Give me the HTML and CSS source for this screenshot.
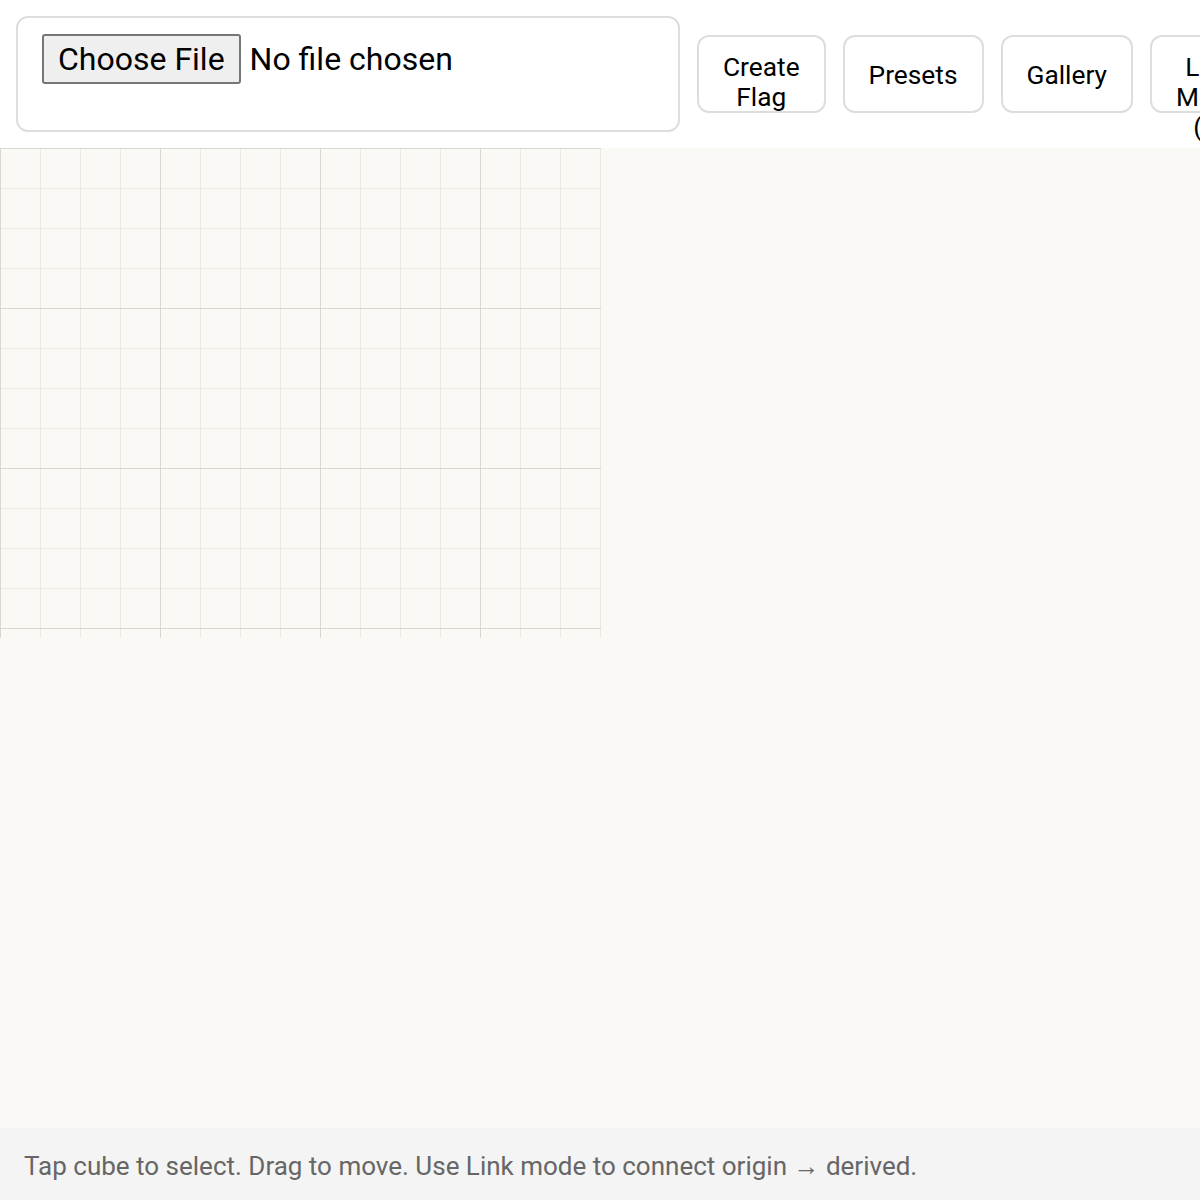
FILE: index.html
```html
<!DOCTYPE html>
<html lang="en">
<head>
<meta charset="utf-8">
<title>Cube Flags</title>
<link rel="stylesheet" href="styles.css">
</head>
<body>
<div class="app">
  <header class="toolbar">
    <div class="file-box">
      <input class="file-input" type="file" accept="image/*">
    </div>
    <button class="tool-btn" type="button">Create Flag</button>
    <button class="tool-btn" type="button">Presets</button>
    <button class="tool-btn" type="button">Gallery</button>
    <button class="tool-btn" type="button">Link Mode (L)</button>
  </header>
  <main class="stage">
    <div class="grid"></div>
  </main>
  <footer class="status">Tap cube to select. Drag to move. Use Link mode to connect origin → derived.</footer>
</div>
</body>
</html>
```

FILE: styles.css
```css
html, body {
  margin: 0;
  padding: 0;
  height: 100%;
  overflow: hidden;
}

body {
  font-family: Roboto, "Liberation Sans", sans-serif;
  background: #ffffff;
  color: #000;
}

.app {
  display: flex;
  flex-direction: column;
  height: 100vh;
  width: 100vw;
  overflow: hidden;
}

/* top toolbar */
.toolbar {
  display: flex;
  align-items: center;
  gap: 17px;
  padding: 16px 16px 16px;
  background: #ffffff;
  flex: none;
}

.file-box {
  flex: none;
  box-sizing: border-box;
  width: 664px;
  height: 116px;
  padding: 16px 24px;
  border: 2px solid #dddddd;
  border-radius: 12px;
  background: #fff;
}

.file-input {
  font-family: Roboto, "Liberation Sans", sans-serif;
  font-size: 32px;
  color: #000;
}

.file-input::file-selector-button {
  font-family: inherit;
  font-size: 32px;
  height: 50px;
  padding: 0 14px;
  margin-right: 9px;
  background: #efefef;
  border: 2px solid #767676;
  border-radius: 3px;
  color: #000;
}

.tool-btn {
  flex: 0 1 auto;
  box-sizing: border-box;
  height: 78px;
  padding: 15px 24px 13px;
  border: 2px solid #dddddd;
  border-radius: 12px;
  background: #ffffff;
  font-family: Roboto, "Liberation Sans", sans-serif;
  font-size: 26.3px;
  color: #000;
  line-height: 30px;
}

/* canvas area */
.stage {
  flex: 1;
  background: #faf9f6;
}

.grid {
  width: 601px;
  height: 490px;
  background-color: #faf9f6;
  background-image:
    linear-gradient(to right, #d9d7d2 1px, transparent 1px),
    linear-gradient(to bottom, #d9d7d2 1px, transparent 1px),
    linear-gradient(to right, #ebe9e4 1px, transparent 1px),
    linear-gradient(to bottom, #ebe9e4 1px, transparent 1px);
  background-size: 160px 160px, 160px 160px, 40px 40px, 40px 40px;
}

/* bottom hint */
.status {
  flex: none;
  box-sizing: border-box;
  height: 72px;
  padding: 4px 24px 0;
  display: flex;
  align-items: center;
  background: #f4f4f4;
  color: #666666;
  font-size: 26px;
}
```
